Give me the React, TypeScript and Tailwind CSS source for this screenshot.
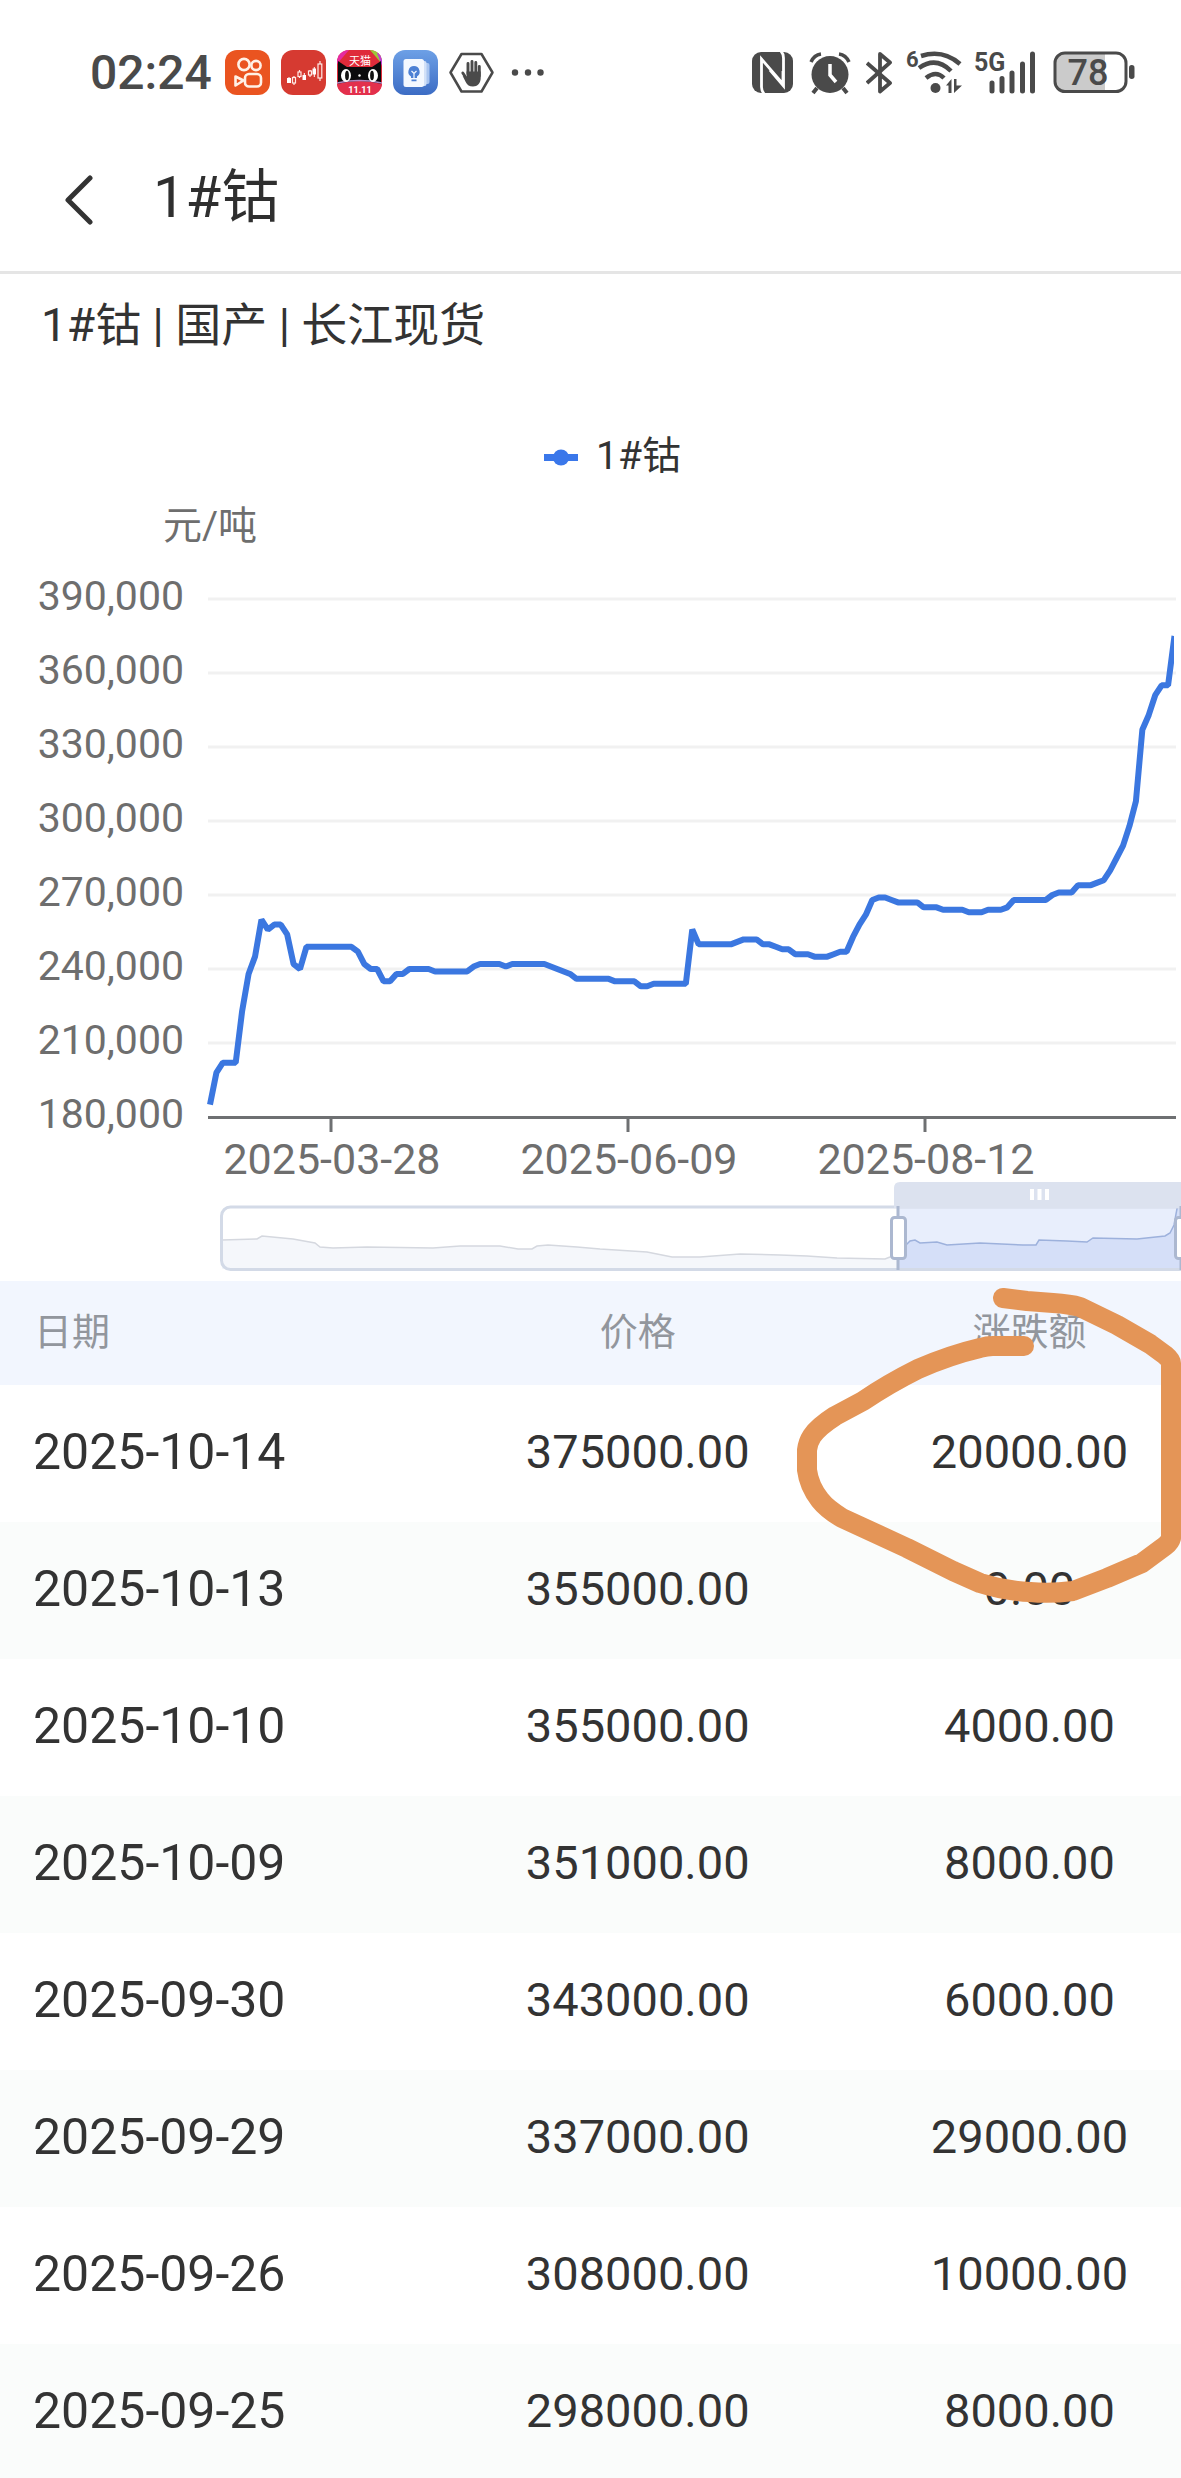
import type { ReactNode } from "react";

type PriceRow = {
  date: string;
  price: string;
  change: string;
};

const rows: PriceRow[] = [
  { date: "2025-10-14", price: "375000.00", change: "20000.00" },
  { date: "2025-10-13", price: "355000.00", change: "0.00" },
  { date: "2025-10-10", price: "355000.00", change: "4000.00" },
  { date: "2025-10-09", price: "351000.00", change: "8000.00" },
  { date: "2025-09-30", price: "343000.00", change: "6000.00" },
  { date: "2025-09-29", price: "337000.00", change: "29000.00" },
  { date: "2025-09-26", price: "308000.00", change: "10000.00" },
  { date: "2025-09-25", price: "298000.00", change: "8000.00" },
];

// 单位:千元/吨,每个交易日一个点
const prices = [
  185, 198, 202, 202, 202, 223, 238, 245, 260, 256, 258, 258, 254, 242, 240,
  249, 249, 249, 249, 249, 249, 249, 249, 247, 242, 240, 240, 235, 235, 238,
  238, 240, 240, 240, 240, 239, 239, 239, 239, 239, 239, 241, 242, 242, 242,
  242, 241, 242, 242, 242, 242, 242, 242, 241, 240, 239, 238, 236, 236, 236,
  236, 236, 236, 235, 235, 235, 235, 233, 233, 234, 234, 234, 234, 234, 234,
  256, 250, 250, 250, 250, 250, 250, 251, 252, 252, 252, 250, 250, 249, 248,
  248, 246, 246, 246, 245, 245, 245, 246, 247, 247, 253, 258, 262, 268, 269,
  269, 268, 267, 267, 267, 267, 265, 265, 265, 264, 264, 264, 264, 263, 263,
  263, 264, 264, 264, 265, 268, 268, 268, 268, 268, 268, 270, 271, 271, 271,
  274, 274, 274, 275, 276, 280, 285, 290, 298, 308, 337, 343, 351, 355, 355,
  375,
];

const yTicks = [390, 360, 330, 300, 270, 240, 210, 180];
const xTicks = [
  { x: 331, label: "2025-03-28" },
  { x: 628, label: "2025-06-09" },
  { x: 925, label: "2025-08-12" },
];

const toY = (v: number) => 630 - ((v - 180) * 74) / 30;
const linePoints = prices.map((v, i) => `${210 + i * 6.43},${toY(v)}`).join(" ");

const before =
  "222,753 257,752 262,749 293,752 315,756 320,760 333,761 367,760 433,761 460,759 500,759 518,762 532,762 537,759 548,758 577,760 600,762 647,765 672,770 700,770 740,767 780,768 807,769 837,771 885,772 890,770 898,766";
const selected =
  "898,766 907,757 910,754 915,753 920,756 937,755 947,758 980,756 1023,758 1036,758 1039,753 1067,754 1087,755 1093,751 1137,752 1165,749 1170,746 1174,738 1181,700";

const AppIcon = ({ children }: { children: ReactNode }) => (
  <svg className="size-[45px] rounded-xl" viewBox="0 0 45 45" aria-hidden="true">
    {children}
  </svg>
);

const StatusBar = () => (
  <div className="flex items-center justify-between pt-[50px] pb-[27px] pl-[90px] pr-[46px] text-[#4a4a4a]">
    <div className="flex h-[45px] items-center gap-[11px]">
      <span className="mr-[2px] text-[48px] leading-[45px] font-medium">02:24</span>
      <AppIcon>
        <rect width="45" height="45" fill="#ea5420" />
        <g fill="none" stroke="#fff1e6" strokeWidth="2.6" strokeLinejoin="round">
          <circle cx="19" cy="14.5" r="5.6" />
          <circle cx="31" cy="15.5" r="4.6" />
          <rect x="20" y="24" width="16" height="12.5" rx="4" />
          <path d="M10.5 26.5 18.5 30.5 10.5 35.5Z" />
        </g>
      </AppIcon>
      <AppIcon>
        <rect width="45" height="45" fill="#d63a31" />
        <g fill="none" stroke="#ffeae6" strokeWidth="1.2">
          <path d="M13 27v-1M13 33v2M18.5 22v-2M18.5 26v2M29 21v-1M29 25v2M39 14v-3M39 28v3" />
          <rect x="11.5" y="27.5" width="3" height="5.5" />
          <rect x="17" y="22" width="3" height="4.5" />
          <rect x="27.5" y="21" width="3" height="4" />
          <rect x="37" y="14" width="3.8" height="14" />
        </g>
        <path d="M6 28h4v5H6zM21.5 25h3.5v5h-3.5zM31.5 18.5h3.5v6h-3.5z" fill="#fff" />
        <path d="M8 27v2M23.3 23v3M33.3 17v10" stroke="#fff" />
      </AppIcon>
      <AppIcon>
        <rect width="45" height="45" fill="#df2b3a" />
        <path d="M0 0h12L0 14z" fill="#e52ba2" />
        <path d="M33 0h12v14z" fill="#9bc83a" />
        <path d="M40 3 45 0v16z" fill="#c13ad8" />
        <path d="M1 11 10 17h25l9-6v24H1z" fill="#0b0b0d" />
        <path d="M0 34q22-6 45 0v11H0z" fill="#e3304c" />
        <path d="M0 33q22-5 45 0" fill="none" stroke="#b38ac4" strokeWidth="1.5" />
        <ellipse cx="9" cy="25.5" rx="5" ry="6.5" fill="#fff" />
        <ellipse cx="36" cy="25.5" rx="5" ry="6.5" fill="#fff" />
        <ellipse cx="10" cy="25.5" rx="1.9" ry="4.8" fill="#111" />
        <ellipse cx="35" cy="25.5" rx="1.9" ry="4.8" fill="#111" />
        <circle cx="22.5" cy="25.5" r="1.2" fill="#fff" />
        <text x="23" y="14.5" textAnchor="middle" fontSize="11" fill="#fff">天猫</text>
        <text x="23" y="43" textAnchor="middle" fontSize="9" fontWeight="700" fill="#fff">11.11</text>
      </AppIcon>
      <AppIcon>
        <defs>
          <linearGradient id="tip" x1="0" y1="0" x2="0" y2="1">
            <stop offset="0" stopColor="#6da0e6" />
            <stop offset="1" stopColor="#3c6cc4" />
          </linearGradient>
        </defs>
        <rect width="45" height="45" fill="url(#tip)" />
        <rect x="27" y="13" width="9.5" height="21" rx="2" fill="#a9c5f0" />
        <rect x="25" y="11" width="8.5" height="25" rx="2" fill="#d2e1f8" />
        <rect x="10.5" y="9" width="20.5" height="28" rx="2.5" fill="#f3f8ff" />
        <path d="M21 16a5.7 5.7 0 0 0-3 10.500V28h6v-1.500A5.700 5.700 0 0 0 21 16Z" fill="#4c80d4" />
        <path d="m18.5 21 2.500 2.500 2.500-2.500M21 23.500V28" fill="none" stroke="#f3f8ff" strokeWidth="1.2" />
        <path d="M18.5 30.300h5" stroke="#4c80d4" strokeWidth="1.8" />
      </AppIcon>
      <svg className="size-[45px]" viewBox="0 0 45 45" aria-hidden="true">
        <path d="M12.5 4h20L43.5 22.5 32.5 41.5h-20L1.5 22.5Z" fill="none" stroke="currentColor" strokeWidth="2.5" strokeLinejoin="round" />
        <g fill="none" stroke="currentColor" strokeWidth="2.9" strokeLinecap="round">
          <path d="M19 24V13.500M23 24V11.500M26.800 24V12.500M30.300 26V16.500M13.800 23l4 6" />
        </g>
        <path d="M17.5 21.5h14.2V28c0 5-3.200 8.500-7.700 8.500-3.700 0-5.700-1.500-7.300-4.500l-3-6 4 1z" fill="currentColor" />
      </svg>
      <svg className="ml-[6px] h-[45px] w-[36px]" viewBox="0 0 36 45" fill="currentColor" aria-hidden="true">
        <circle cx="4" cy="22.5" r="3.2" />
        <circle cx="17" cy="22.5" r="3.2" />
        <circle cx="29.5" cy="22.5" r="3.2" />
      </svg>
    </div>

    <div className="flex h-[45px] items-center">
      <svg className="mr-[15px] h-[45px] w-[42px]" viewBox="0 0 42 45" aria-hidden="true">
        <rect y="2" width="41" height="41" rx="9" fill="currentColor" />
        <path d="M12 44Q9.500 41 9.500 37V9L31 34V21M29 1q2.500 3 2.500 7v28L18 20" fill="none" stroke="#fff" strokeWidth="2.8" />
      </svg>
      <svg className="mr-[15px] h-[45px] w-[42px]" viewBox="0 0 42 45" aria-hidden="true">
        <circle cx="21" cy="24.5" r="18.5" fill="currentColor" />
        <path d="M2 12Q5 5 12 4M30 4q7 1 10 8" fill="none" stroke="currentColor" strokeWidth="3.5" />
        <path d="m8 38-4 5M34 38l4 5" stroke="currentColor" strokeWidth="4" />
        <path d="M21 14v11l6 7" fill="none" stroke="#fff" strokeWidth="3.5" />
      </svg>
      <svg className="mr-[10px] h-[45px] w-[28px]" viewBox="0 0 28 45" aria-hidden="true">
        <path d="m1 13 23 20-10 8.500V4l10 8.500L1 33" fill="none" stroke="currentColor" strokeWidth="3.8" strokeLinejoin="round" />
      </svg>
      <svg className="mr-[8px] h-[65px] w-[60px]" viewBox="-2 -10 60 65" aria-hidden="true">
        <text x="0" y="17" fontSize="22" fontWeight="700" fill="currentColor">6</text>
        <g fill="none" stroke="currentColor" strokeWidth="4.5">
          <path d="M15 6q22-7 39 8" />
          <path d="M13 18q17-12 32 3" />
          <path d="M20 28q10-8 18 0" />
        </g>
        <circle cx="29.5" cy="38" r="5" fill="currentColor" />
        <path d="M40 35.500 45.500 29v14h-3v-7.500zM48 29h2.500v6.500H56L48 43z" fill="currentColor" />
      </svg>
      <svg className="mr-[16px] h-[65px] w-[65px]" viewBox="-3 -10 65 65" aria-hidden="true">
        <text x="-1" y="21" fontSize="25" fontWeight="700" fill="currentColor">5G</text>
        <path d="M17 33v8M27 28.500V41M37 23v18M47.500 14v27M57.500 4v37" stroke="currentColor" strokeWidth="5" strokeLinecap="round" />
      </svg>
      <svg className="h-[45px] w-[82px]" viewBox="0 0 82 45" aria-hidden="true">
        <path d="M12 4h40v36H12q-9 0-9-9V13q0-9 9-9Z" fill="#cbcbcb" />
        <rect x="2" y="3" width="71" height="38.5" rx="10" fill="none" stroke="currentColor" strokeWidth="3" />
        <rect x="76" y="15" width="5.5" height="14" rx="2.7" fill="currentColor" />
        <text x="35" y="35" textAnchor="middle" fontSize="36" fontWeight="500" fill="currentColor">78</text>
      </svg>
    </div>
  </div>
);

const PriceChart = () => (
  <svg className="block w-full" viewBox="0 0 1181 794" role="img" aria-label="1#钴 价格走势">
    <text x="163" y="52" fontSize="39" fill="#6e6e6e">元/吨</text>
    {yTicks.map((v) => (
      <g key={v}>
        <text x="184" y={toY(v) + 11} textAnchor="end" fontSize="41" fill="#6e6e6e">
          {v},000
        </text>
        {v > 180 && <path d={`M208 ${toY(v)}H1176`} stroke="#f1f1f1" strokeWidth="3" />}
      </g>
    ))}
    <path d="M208 630.500H1176" stroke="#6e7072" strokeWidth="3" />
    {xTicks.map((t) => (
      <g key={t.label}>
        <path d={`M${t.x} 631v14`} stroke="#6e7072" strokeWidth="3" />
        <text x={t.x + 1} y="687" textAnchor="middle" fontSize="43" fill="#6e6e6e">
          {t.label}
        </text>
      </g>
    ))}
    <clipPath id="plot">
      <rect x="200" y="100" width="974" height="540" />
    </clipPath>
    <polyline points={linePoints} clipPath="url(#plot)" fill="none" stroke="#3b77e0" strokeWidth="6" strokeLinejoin="bevel" />

    {/* 底部缩放条 */}
    <polygon points={`222,782 ${before} 898,782`} fill="#f5f7fb" />
    <polyline points={before} fill="none" stroke="#d5d8df" strokeWidth="1.5" />
    <rect x="898" y="721" width="290" height="61" fill="#e8eefc" />
    <polygon points={`898,782 ${selected} 1181,782`} fill="#d5dff8" />
    <polyline points={selected} fill="none" stroke="#9db1dc" strokeWidth="1.5" />
    <rect x="221.5" y="720" width="980" height="62.5" rx="9" fill="none" stroke="#d3dae7" strokeWidth="3" />
    <path d="M894 721v-20q0-6 6-6h290v26z" fill="#dce2ef" />
    <path d="M1032 702v11M1039.500 702v11M1047 702v11" stroke="#fff" strokeWidth="4" />
    <g stroke="#acb8d0" strokeWidth="3">
      <path d="M898 719v64M1181 719v64" />
      <rect x="891.5" y="730.5" width="14" height="41" rx="3" fill="#fff" />
      <rect x="1175.5" y="730.5" width="14" height="41" rx="3" fill="#fff" />
    </g>
  </svg>
);

const PriceTable = () => (
  <div className="relative">
    <table className="w-full table-fixed border-collapse text-[#333]">
      <thead>
        <tr className="h-[104px] bg-[#f2f6fe] text-[38px] text-[#92969d]">
          <th className="w-[34%] pb-[2px] pl-[34px] text-left font-normal">日期</th>
          <th className="w-[40%] pb-[2px] text-center font-normal">价格</th>
          <th className="w-[26%] pb-[2px] pl-1 text-center font-normal">涨跌额</th>
        </tr>
      </thead>
      <tbody>
        {rows.map((row) => (
          <tr key={row.date} className="h-[137px] even:bg-[#fafcfb]">
            <td className="pb-[3px] pl-[33px] text-[50px]">{row.date}</td>
            <td className="pb-[3px] text-center text-[47px]">{row.price}</td>
            <td className="pb-[3px] pl-1 text-center text-[47px]">{row.change}</td>
          </tr>
        ))}
      </tbody>
    </table>
    {/* 手绘圈注 */}
    <svg className="pointer-events-none absolute top-0 right-0 h-[340px] w-[401px]" viewBox="780 1281 401 340" aria-hidden="true">
      <path
        d="M1003 1298 1027 1301 1053 1303Q1070 1304 1080 1307L1117 1325 1150 1344 1165 1355Q1171 1360 1171 1363V1538Q1170 1542 1165 1546L1142 1563 1107 1578 1073 1591Q1050 1594 1030 1592 1005 1591 980 1583L953 1571 907 1548 842 1518Q827 1509 820 1500 809 1486 807 1470V1450Q808 1442 812 1436 818 1427 835 1416L863 1401Q888 1384 918 1369 950 1355 980 1348 987 1346 993 1346H1024"
        fill="none"
        stroke="#e49557"
        strokeWidth="20"
        strokeLinecap="round"
        strokeLinejoin="round"
      />
    </svg>
  </div>
);

export default function App() {
  return (
    <main className="h-screen overflow-hidden bg-white font-['Roboto','Noto_Sans_CJK_SC',sans-serif]">
      <StatusBar />
      <header className="flex h-[152px] items-center border-b-3 border-[#e5e5e5] pl-[60px]">
        <button type="button" aria-label="返回" className="mr-[57px]">
          <svg className="h-[56px] w-[36px]" viewBox="0 0 36 56" fill="none" stroke="#333" strokeWidth="5" strokeLinecap="round" strokeLinejoin="round">
            <path d="M30 9 8 31 30 53" />
          </svg>
        </button>
        <h1 className="text-[58px] leading-none text-[#2f2f2f]">1#钴</h1>
      </header>
      <h2 className="pl-[41px] text-[46px] leading-[102px] text-[#333]">1#钴 | 国产 | 长江现货</h2>
      <div className="mt-[51px] flex h-[60px] items-center justify-center gap-[18px] pl-[44px]">
        <svg className="h-[20px] w-[34px]" viewBox="0 0 34 20" fill="#3a77ea" aria-hidden="true">
          <rect y="7" width="34" height="7" />
          <circle cx="17" cy="10.5" r="8" />
        </svg>
        <span className="pb-[2px] text-[39px] leading-none text-[#333]">1#钴</span>
      </div>
      <PriceChart />
      <PriceTable />
    </main>
  );
}
